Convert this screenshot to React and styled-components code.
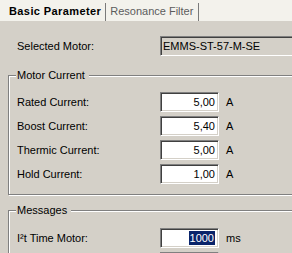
import React from 'react';
import styled, { createGlobalStyle } from 'styled-components';

const Global = createGlobalStyle`
  html, body { margin: 0; padding: 0; background: #d4d0c8; }
  body { font-family: "Liberation Sans", Arial, sans-serif; font-size: 11px; color: #000; }
`;

const Window = styled.div`
  width: 292px;
  height: 253px;
  overflow: hidden;
  background: #d4d0c8;
  display: flex;
  flex-direction: column;
`;

const TabStrip = styled.div`
  flex: none;
  height: 21px;
  display: flex;
  padding-left: 7px;
  background: #f3f2ec;
`;

const Tab = styled.div`
  position: relative;
  display: flex;
  align-items: center;
  padding: 0 ${p => (p.$active ? 5 : 6)}px 0 ${p => (p.$active ? 2 : 4)}px;
  font-weight: ${p => (p.$active ? 700 : 400)};
  letter-spacing: ${p => (p.$active ? '0.4px' : '0')};
  color: ${p => (p.$active ? '#000' : '#5c5c5c')};
  white-space: nowrap;
  &::after {
    content: '';
    position: absolute;
    right: 0;
    top: 3px;
    bottom: 0;
    width: 1px;
    background: #7a7a7a;
  }
`;

const Panel = styled.div`
  flex: 1;
  padding: 15px 0 0 8px;
  display: flex;
  flex-direction: column;
`;

const MotorRow = styled.div`
  display: grid;
  grid-template-columns: 143px 200px;
  align-items: center;
  padding-left: 9px;
`;

const Label = styled.span`
  white-space: nowrap;
`;

const Field = styled.div`
  box-sizing: border-box;
  height: 20px;
  display: flex;
  align-items: center;
  justify-content: ${p => (p.$left ? 'flex-start' : 'flex-end')};
  padding: ${p => (p.$left ? '0 0 0 2px' : '0 3px 0 0')};
  background: ${p => (p.$disabled ? '#d4d0c8' : '#fff')};
  border-top: 1px solid #808080;
  border-left: 1px solid #808080;
  border-bottom: 1px solid #fff;
  border-right: 1px solid #fff;
  box-shadow: inset 1px 1px 0 #404040, inset -1px -1px 0 #d4d0c8;
  white-space: nowrap;
`;

const Group = styled.div`
  position: relative;
  width: 300px;
  margin-top: ${p => p.$mt}px;
  padding: ${p => p.$pt}px 0 10px 8px;
  border: 1px solid #808080;
  box-shadow: 1px 1px 0 #fff, inset 1px 1px 0 #fff;
`;

const Legend = styled.span`
  position: absolute;
  top: -8px;
  left: 7px;
  padding: 0 4px 0 1px;
  line-height: 14px;
  background: #d4d0c8;
`;

const Rows = styled.div`
  display: grid;
  grid-template-columns: 136px 59px auto;
  column-gap: 7px;
  row-gap: 4px;
  align-items: center;
`;

const Selected = styled.span`
  background: #0a246a;
  color: #fff;
  line-height: 14px;
  padding: 0 1px;
`;

const motorRows = [
  ['Rated Current:', '5,00', 'A'],
  ['Boost Current:', '5,40', 'A'],
  ['Thermic Current:', '5,00', 'A'],
  ['Hold Current:', '1,00', 'A'],
];

export default function App() {
  return (
    <Window>
      <Global />
      <TabStrip>
        <Tab $active>Basic Parameter</Tab>
        <Tab>Resonance Filter</Tab>
      </TabStrip>
      <Panel>
        <MotorRow>
          <Label>Selected Motor:</Label>
          <Field $left $disabled>EMMS-ST-57-M-SE</Field>
        </MotorRow>
        <Group $mt={19} $pt={16}>
          <Legend>Motor Current</Legend>
          <Rows>
            {motorRows.map(([l, v, u]) => (
              <React.Fragment key={l}>
                <Label>{l}</Label>
                <Field>{v}</Field>
                <Label>{u}</Label>
              </React.Fragment>
            ))}
          </Rows>
        </Group>
        <Group $mt={15} $pt={17}>
          <Legend>Messages</Legend>
          <Rows>
            <Label>I²t Time Motor:</Label>
            <Field><Selected>1000</Selected></Field>
            <Label>ms</Label>
            <Label></Label>
            <Field></Field>
            <Label></Label>
          </Rows>
        </Group>
      </Panel>
    </Window>
  );
}
